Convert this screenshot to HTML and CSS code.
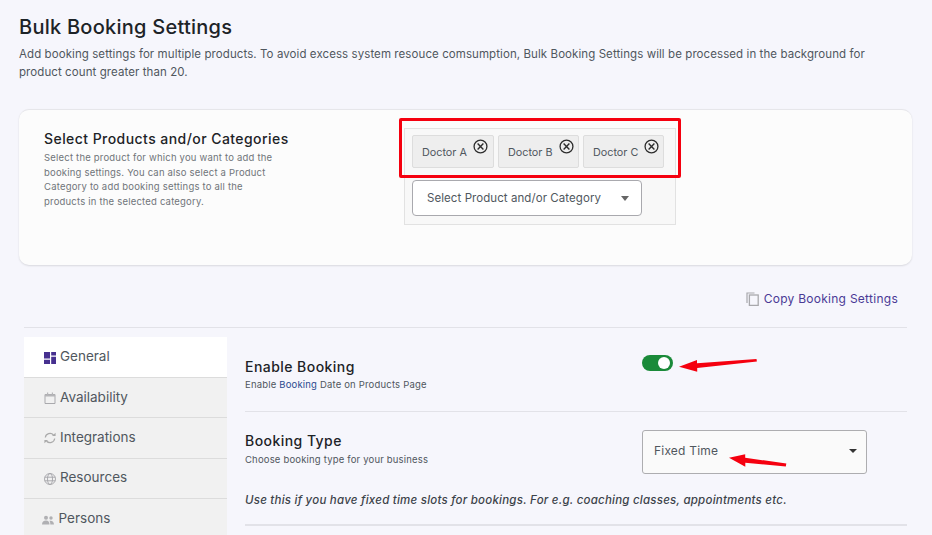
FILE: index.html
```html
<!DOCTYPE html>
<html lang="en">
<head>
<meta charset="utf-8">
<title>Bulk Booking Settings</title>
<link rel="stylesheet" href="styles.css">
</head>
<body>
<main class="page">
  <header class="head">
    <h1 class="title">Bulk Booking Settings</h1>
    <p class="lead">Add booking settings for multiple products. To avoid excess system resouce comsumption, Bulk Booking Settings will be processed in the background for product count greater than 20.</p>
  </header>

  <section class="card">
    <div class="card-info">
      <h2 class="card-title">Select Products and/or Categories</h2>
      <p class="card-desc">Select the product for which you want to add the booking settings. You can also select a Product Category to add booking settings to all the products in the selected category.</p>
    </div>
    <div class="picker">
      <div class="tags">
        <span class="tag">Doctor A<svg class="tag-x" viewBox="0 0 14 14"><circle cx="7" cy="7" r="6" fill="none" stroke="#2c2c2c" stroke-width="1.2"/><path d="M4.3 4.300l5.400 5.400M9.700 4.300l-5.400 5.400" stroke="#2c2c2c" stroke-width="1.300"/></svg></span>
        <span class="tag">Doctor B<svg class="tag-x" viewBox="0 0 14 14"><circle cx="7" cy="7" r="6" fill="none" stroke="#2c2c2c" stroke-width="1.2"/><path d="M4.3 4.300l5.400 5.400M9.700 4.300l-5.400 5.400" stroke="#2c2c2c" stroke-width="1.300"/></svg></span>
        <span class="tag">Doctor C<svg class="tag-x" viewBox="0 0 14 14"><circle cx="7" cy="7" r="6" fill="none" stroke="#2c2c2c" stroke-width="1.2"/><path d="M4.3 4.300l5.400 5.400M9.700 4.300l-5.400 5.400" stroke="#2c2c2c" stroke-width="1.300"/></svg></span>
      </div>
      <div class="picker-select"><span>Select Product and/or Category</span><i class="caret"></i></div>
    </div>
  </section>

  <div class="copy-row">
    <a class="copy">
      <svg class="copy-icon" viewBox="0 0 13 14"><path d="M8.500 1H1v10" fill="none" stroke="#a8a8ac" stroke-width="1.200"/><rect x="3.400" y="3" width="8.800" height="10.400" fill="none" stroke="#a8a8ac" stroke-width="1.300"/></svg>
      Copy Booking Settings
    </a>
  </div>

  <div class="settings">
    <nav class="tabs">
      <div class="tab tab-active">
        <svg class="tab-icon" viewBox="1 1 10 10"><path fill="#46308f" d="M1 1h5v5.500H1zM7 1h4v3H7zM7 5h4v6H7zM1 7.500h5V11H1z"/></svg>General
      </div>
      <div class="tab">
        <svg class="tab-icon" viewBox="0 0 12 12"><path fill="none" stroke="#a9a9ad" d="M1 2.500h10v9H1z"/><path fill="#b5b5b8" d="M1 2.500h10v2H1zM3 .5h1.200v2H3zM7.800.5H9v2H7.800z"/></svg>Availability
      </div>
      <div class="tab">
        <svg class="tab-icon" viewBox="0 0 12 12"><path fill="none" stroke="#aaa" stroke-width="1.200" d="M1.300 5.500A4.700 4.700 0 0 1 9.500 3M10.700 6.500A4.700 4.700 0 0 1 2.500 9"/><path fill="#aaa" d="M8 4h3.600V.8zM4 8H.4v3.200z"/></svg>Integrations
      </div>
      <div class="tab">
        <svg class="tab-icon" viewBox="0 0 12 12"><g fill="none" stroke="#a4a4a8" stroke-width=".9"><circle cx="6" cy="6" r="5.500"/><ellipse cx="6" cy="6" rx="2.500" ry="5.500"/><path d="M.8 4.200h10.400M.8 7.800h10.400"/></g></svg>Resources
      </div>
      <div class="tab tab-persons">
        <svg class="tab-icon" viewBox="0 0 12 12"><g fill="#b0b0b3"><circle cx="4" cy="3.800" r="2"/><circle cx="9" cy="4" r="1.700"/><path d="M0 10.500c0-2.800 1.700-4 4-4s3.500 1.200 3.500 4zM8.300 10.500c0-1.700-.2-2.800-.9-3.700 2.500-.6 4.600.6 4.600 3.700z"/></g></svg>Persons
      </div>
    </nav>

    <div class="panel">
      <div class="row row-enable">
        <div class="row-text">
          <h3 class="row-title">Enable Booking</h3>
          <p class="row-desc">Enable <span class="link">Booking</span> Date on Products Page</p>
        </div>
        <div class="row-control"><span class="toggle"><i class="knob"></i></span></div>
      </div>
      <div class="block-type">
        <div class="row row-type">
          <div class="row-text">
            <h3 class="row-title">Booking Type</h3>
            <p class="row-desc">Choose booking type for your business</p>
          </div>
          <div class="row-control"><div class="type-select"><span>Fixed Time</span><i class="caret caret-dark"></i></div></div>
        </div>
        <p class="hint">Use this if you have fixed time slots for bookings. For e.g. coaching classes, appointments etc.</p>
      </div>
    </div>
  </div>
</main>

<div class="redbox"></div>
<svg class="arrows" viewBox="0 0 932 535" width="932" height="535">
  <path fill="#f5000f" d="M679 366.700L697 360v3.200L756.500 358.900l.4 2.700L697.200 368v3.800z"/>
  <path fill="#f5000f" d="M729 457.700L745.200 454.300v3.400L786.300 463.600l-.5 3L745.300 462.800v4z"/>
</svg>
</body>
</html>
```

FILE: styles.css
```css
* { box-sizing: border-box; }
html, body { margin: 0; height: 535px; overflow: hidden; }
body {
  position: relative;
  background: #f6f6fc;
  font-family: Inter, "Liberation Sans", sans-serif;
  color: #3c434a;
}
.page { padding: 0 20px 0 19px; }

.head { height: 109px; padding-top: 15px; }
.title {
  margin: 0;
  font-size: 20px;
  line-height: 24px;
  font-weight: 500;
  color: #1d2327;
  letter-spacing: .25px;
}
.lead {
  margin: 6px 0 0;
  font-size: 11.500px;
  line-height: 18px;
  letter-spacing: .08px;
  color: #50575e;
  width: 880px;
}

.card {
  display: flex;
  height: 156px;
  background: #fcfcfc;
  border-top: 1px solid #e6e6ea;
  border-radius: 10px;
  box-shadow: 0 1px 2px rgba(0,0,0,.12);
}
.card-info { width: 385px; padding: 20px 0 0 25px; }
.card-title {
  margin: 0;
  font-size: 14px;
  line-height: 18px;
  font-weight: 500;
  color: #1d2327;
  letter-spacing: .44px;
}
.card-desc {
  margin: 3px 0 0;
  width: 235px;
  font-size: 9.500px;
  line-height: 14.600px;
  letter-spacing: .2px;
  color: #70757a;
}
.picker {
  width: 272px;
  height: 97px;
  margin-top: 18px;
  padding: 6px 7px;
  background: #f8f8f8;
  border: 1px solid #e2e2e2;
}
.tags { display: flex; gap: 4px; }
.tag {
  position: relative;
  width: 82px;
  height: 33px;
  padding: 9px 0 0 9px;
  background: #eeeeee;
  border: 1px solid #dddddd;
  border-radius: 2px;
  font-size: 10.800px;
  line-height: 15px;
  color: #50575e;
}
.tag:nth-child(2), .tag:nth-child(3) { width: 81px; }
.tag-x {
  position: absolute;
  top: 3px;
  right: 5px;
  width: 15px;
  height: 15px;
}
.tag:nth-child(2) .tag-x, .tag:nth-child(3) .tag-x { right: 4px; }
.picker-select {
  display: flex;
  align-items: center;
  justify-content: space-between;
  width: 230px;
  height: 36px;
  margin-top: 12px;
  padding: 0 12px 0 14px;
  background: #fff;
  border: 1px solid #a9a9ae;
  border-radius: 4px;
  font-size: 11.500px;
  letter-spacing: .07px;
  color: #50575e;
}
.caret {
  width: 0;
  height: 0;
  border-style: solid;
  border-width: 5px 4.500px 0;
  border-color: #666 transparent transparent;
}
.caret-dark { border-width: 4px 4px 0; border-color: #333 transparent transparent; }

.copy-row {
  display: flex;
  justify-content: flex-end;
  height: 63px;
  padding: 26px 9px 0 0;
  border-bottom: 1px solid #e2e2e8;
  margin: 0 5px;
}
.copy {
  display: flex;
  align-items: flex-start;
  gap: 5px;
  font-size: 12px;
  line-height: 16px;
  letter-spacing: .27px;
  color: #4a3a96;
}
.copy-icon { width: 13px; height: 14px; margin-top: 1px; }

.settings { display: flex; margin: 9px 5px 0; }
.tabs { width: 203px; flex: none; }
.tab {
  display: flex;
  align-items: center;
  height: 40.250px;
  padding: 0 0 2px 20px;
  background: #f1f1f1;
  border-top: 1px solid #dcdcdc;
  font-size: 13.500px;
  color: #50575e;
}
.tab-active { height: 40px; background: #fff; border-top: 0; }
.tab-persons { padding-bottom: 0; }
.tab-icon { width: 12px; height: 12px; margin-right: 4px; flex: none; margin-top: 3px; }
.tab-persons .tab-icon { margin-right: 4.500px; margin-left: -2px; }

.panel { flex: 1; margin-left: 18px; }
.row { display: flex; }
.row-text { width: 397px; }
.row-enable { height: 75px; padding-top: 21px; border-bottom: 1px solid #e2e2e8; }
.row-control { flex: 1; }
.row-title {
  margin: 0;
  font-size: 14px;
  line-height: 18px;
  font-weight: 500;
  color: #1d2327;
  letter-spacing: .45px;
}
.row-desc {
  margin: 2px 0 0;
  font-size: 9.500px;
  line-height: 14px;
  letter-spacing: .18px;
  color: #50575e;
}
.row-type .row-desc { margin-top: 3px; }
.link { color: #2a4a8f; }
.toggle {
  position: relative;
  display: block;
  width: 31px;
  height: 16px;
  margin-top: -3px;
  border-radius: 8px;
  background: #1a8a39;
}
.knob {
  position: absolute;
  top: 2px;
  right: 3px;
  width: 12px;
  height: 12px;
  border-radius: 50%;
  background: #fff;
}
.block-type { height: 114px; padding-top: 18px; border-bottom: 2px solid #e2e2e8; }
.row-type .row-title { margin-top: 2px; }
.type-select {
  display: flex;
  align-items: center;
  justify-content: space-between;
  width: 225px;
  height: 44px;
  padding: 0 9px 3px 11px;
  background: #fafafa;
  border: 1px solid #adadb0;
  border-radius: 3px;
  font-size: 12px;
  letter-spacing: .2px;
  color: #50575e;
}
.hint {
  margin: 18px 0 0;
  font-size: 11.500px;
  line-height: 16px;
  font-style: italic;
  font-weight: 500;
  letter-spacing: .23px;
  color: #3c434a;
}

.redbox {
  position: absolute;
  left: 399px;
  top: 118px;
  width: 282px;
  height: 60px;
  border: 3px solid #f5000f;
  border-radius: 2px;
}
.arrows { position: absolute; left: 0; top: 0; pointer-events: none; }
```
